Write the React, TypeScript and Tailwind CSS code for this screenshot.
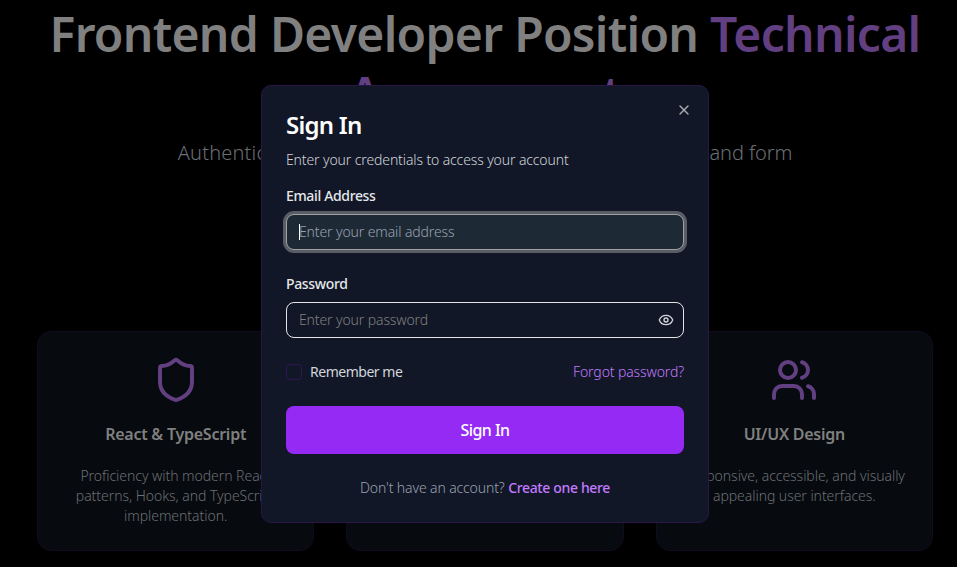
import { Eye, Shield, Users, X } from "lucide-react";
import type { ReactNode } from "react";

function FeatureCard({ icon, title, children }: { icon?: ReactNode; title?: string; children?: ReactNode }) {
  return (
    <article className="flex h-[220px] flex-1 flex-col items-center rounded-[14px] border border-[#120a20] bg-[#070a0e] pt-6 text-center">
      <div className="h-12 text-[#613f80]">{icon}</div>
      <h3 className="mt-4 h-7 whitespace-nowrap text-[16px] font-semibold leading-7 tracking-[-0.25px] text-[#808080]">{title}</h3>
      <p className="mt-[18px] whitespace-nowrap text-[14px] font-light leading-5 tracking-[-0.05px] text-[#6b6f75]">{children}</p>
    </article>
  );
}

function Backdrop() {
  return (
    <main className="flex w-[970px] flex-col items-center">
      <h1 className="mt-1 whitespace-nowrap text-center text-[48px] font-semibold leading-[60px] tracking-[-0.7px] text-[#808080]">
        Frontend Developer Position <span className="text-[#613f80]">Technical<br />Assessment</span>
      </h1>
      <p className="mt-[15px] whitespace-nowrap text-center text-[20px] font-light leading-7 tracking-[0.18px] text-[#6b6f75]">
        Authentication system with modern UI design, validation, <span className="tracking-[-0.1px]">and form</span>
      </p>
      <section className="mt-[164px] flex w-[896px] gap-8">
        <FeatureCard icon={<Shield size={48} />} title="React & TypeScript">
          Proficiency with modern React<br />patterns, Hooks, and TypeScript<br />implementation.
        </FeatureCard>
        <FeatureCard />
        <FeatureCard icon={<Users size={48} />} title="UI/UX Design">
          Responsive, accessible, and visually<br />appealing user interfaces.
        </FeatureCard>
      </section>
    </main>
  );
}

function SignInDialog() {
  return (
    <div role="dialog" className="absolute left-[261px] top-[85px] flex h-[438px] w-[448px] flex-col rounded-[10px] border border-[#281747] bg-[#111726] px-6 text-[14px] tracking-[-0.12px]">
      <button className="absolute right-4 top-4 text-[#a9abb0]" aria-label="Close"><X size={16} /></button>
      <h2 className="mt-[23px] h-8 text-[24px] font-semibold leading-8 tracking-[-0.75px] text-white">Sign In</h2>
      <p className="mt-[9px] h-5 font-light leading-5 text-[#d1d5dc]">Enter your credentials to access your account</p>
      <label className="mt-4 h-5 font-medium leading-5 tracking-[-0.35px] text-[#e5e7eb]">Email Address</label>
      <div className="mt-2 flex h-9 items-center rounded-[8px] border border-[#a1a1a1] bg-[#1e2936] px-3 font-light text-[#99a1af] ring-3 ring-[#595d65]">
        <span className="h-4 w-px bg-white" />
        <span className="-ml-px pb-0.5">Enter your email address</span>
      </div>
      <label className="mt-6 h-5 font-medium leading-5 tracking-[-0.35px] text-[#e5e7eb]">Password</label>
      <div className="mt-2 flex h-9 items-center justify-between rounded-[8px] border border-[#e5e5e5] pl-3 pr-[9px] font-light text-[#808080]">
        <span className="pb-0.5">Enter your password</span>
        <Eye size={16} className="text-[#d1d5dc]" />
      </div>
      <div className="mt-6 flex h-5 items-center">
        <span className="h-4 w-4 rounded-[4px] border border-[#2f1652]" />
        <span className="ml-2 pb-0.5 tracking-[-0.48px] text-[#d1d5dc]">Remember me</span>
        <a className="ml-auto pb-0.5 font-light text-[#c27aff]">Forgot password?</a>
      </div>
      <button className="mt-6 h-12 rounded-[8px] bg-[#952af5] text-[16px] font-medium tracking-[-0.55px] text-white">Sign In</button>
      <p className="mt-6 text-center font-light leading-5 text-[#99a1af]">
        Don't have an account? <a className="font-medium tracking-[-0.35px] text-[#c27aff]">Create one here</a>
      </p>
    </div>
  );
}

export default function App() {
  return (
    <div className="relative h-[567px] w-[957px] overflow-hidden bg-black font-['Noto_Sans',sans-serif]">
      <Backdrop />
      <SignInDialog />
    </div>
  );
}
